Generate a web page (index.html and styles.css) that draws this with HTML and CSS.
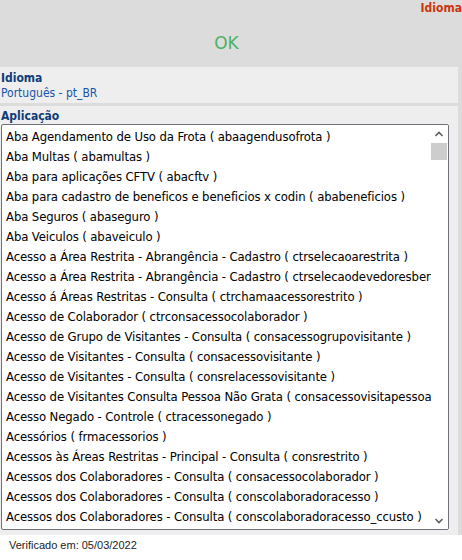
FILE: index.html
```html
<!DOCTYPE html>
<html lang="pt-BR">
<head>
<meta charset="utf-8">
<title>Idioma</title>
<link rel="stylesheet" href="styles.css">
</head>
<body>
<div class="top">
  <div class="title">Idioma</div>
  <div class="ok">OK</div>
</div>
<div class="content">
  <div class="panel lang">
    <div class="label">Idioma</div>
    <div class="value">Português - pt_BR</div>
  </div>
  <div class="panel app">
    <div class="label">Aplicação</div>
    <div class="listbox">
      <div class="items">
        <div class="item">Aba Agendamento de Uso da Frota ( abaagendusofrota )</div>
        <div class="item">Aba Multas ( abamultas )</div>
        <div class="item">Aba para aplicações CFTV ( abacftv )</div>
        <div class="item">Aba para cadastro de beneficos e beneficios x codin ( ababeneficios )</div>
        <div class="item">Aba Seguros ( abaseguro )</div>
        <div class="item">Aba Veiculos ( abaveiculo )</div>
        <div class="item">Acesso a Área Restrita - Abrangência - Cadastro ( ctrselecaoarestrita )</div>
        <div class="item">Acesso a Área Restrita - Abrangência - Cadastro ( ctrselecaodevedoresbens )</div>
        <div class="item">Acesso á Áreas Restritas - Consulta ( ctrchamaacessorestrito )</div>
        <div class="item">Acesso de Colaborador ( ctrconsacessocolaborador )</div>
        <div class="item">Acesso de Grupo de Visitantes - Consulta ( consacessogrupovisitante )</div>
        <div class="item">Acesso de Visitantes - Consulta ( consacessovisitante )</div>
        <div class="item">Acesso de Visitantes - Consulta ( consrelacessovisitante )</div>
        <div class="item">Acesso de Visitantes Consulta Pessoa Não Grata ( consacessovisitapessoanaograta )</div>
        <div class="item">Acesso Negado - Controle ( ctracessonegado )</div>
        <div class="item">Acessórios ( frmacessorios )</div>
        <div class="item">Acessos às Áreas Restritas - Principal - Consulta ( consrestrito )</div>
        <div class="item">Acessos dos Colaboradores - Consulta ( consacessocolaborador )</div>
        <div class="item">Acessos dos Colaboradores - Consulta ( conscolaboradoracesso )</div>
        <div class="item">Acessos dos Colaboradores - Consulta ( conscolaboradoracesso_ccusto )</div>
      </div>
      <div class="scrollbar">
        <svg class="arrow" width="16" height="18" viewBox="0 0 16 18"><path d="M4.5 11 L8 7.5 L11.5 11" fill="none" stroke="#5f5f5f" stroke-width="1.6"/></svg>
        <div class="thumb"></div>
        <div class="track"></div>
        <svg class="arrow" width="16" height="18" viewBox="0 0 16 18"><path d="M4.5 8 L8 11.5 L11.5 8" fill="none" stroke="#5f5f5f" stroke-width="1.6"/></svg>
      </div>
    </div>
  </div>
</div>
<div class="footer">Verificado em: 05/03/2022</div>
</body>
</html>
```
FILE: styles.css
```css
html, body {
  margin: 0;
  padding: 0;
  background: #ffffff;
}
body {
  font-family: "DejaVu Sans Condensed", "DejaVu Sans", sans-serif;
  font-size: 12px;
  width: 462px;
}
.top {
  background: #dcdcdc;
  height: 67px;
  display: flex;
  flex-direction: column;
}
.title {
  align-self: flex-end;
  color: #c8370f;
  font-weight: bold;
  font-size: 12px;
  line-height: 14px;
  padding-top: 1px;
}
.ok {
  align-self: center;
  margin-top: 18px;
  margin-right: 9px;
  color: #4cb363;
  font-family: "DejaVu Sans", sans-serif;
  font-size: 17px;
  line-height: 20px;
}
.content {
  background: #dcdcdc;
  padding-right: 4px;
  display: flex;
  flex-direction: column;
  gap: 3px;
}
.panel {
  background: #eeeeee;
}
.lang {
  height: 36px;
  padding: 4px 0 0 1px;
  box-sizing: border-box;
}
.label {
  color: #0f3d78;
  font-weight: bold;
  line-height: 15px;
}
.value {
  color: #1556a8;
  line-height: 15px;
}
.app {
  padding: 3px 9px 5px 1px;
}
.listbox {
  border: 1px solid #6f6f78;
  border-radius: 2px;
  background: #ffffff;
  height: 404px;
  display: flex;
  overflow: hidden;
}
.items {
  flex: 1;
  min-width: 0;
  overflow: hidden;
  padding-top: 2px;
}
.item {
  white-space: nowrap;
  font-size: 13px;
  letter-spacing: -0.12px;
  line-height: 20px;
  padding-left: 4px;
  color: #000000;
}
.scrollbar {
  width: 17px;
  flex: none;
  display: flex;
  flex-direction: column;
  background: #ffffff;
}
.arrow {
  display: block;
  flex: none;
}
.thumb {
  height: 17px;
  background: #cdcdcd;
  margin: 0 1px 0 0;
}
.track {
  flex: 1;
}
.footer {
  padding: 4px 0 0 9px;
  font-family: "Liberation Sans", Arial, sans-serif;
  font-size: 11px;
  color: #222222;
}
```
